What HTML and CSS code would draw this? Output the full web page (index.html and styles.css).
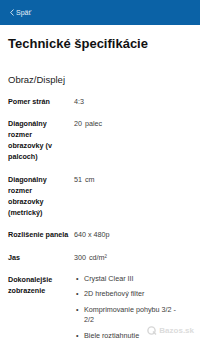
FILE: index.html
```html
<!DOCTYPE html>
<html lang="sk">
<head>
<meta charset="utf-8">
<title>Technické špecifikácie</title>
<link rel="stylesheet" href="styles.css">
</head>
<body>
<header class="topbar">
  <a class="back" href="#">
    <svg class="chev" width="4" height="7" viewBox="0 0 4 7"><path d="M3.5 0.5 L0.7 3.5 L3.5 6.5" fill="none" stroke="#fff" stroke-width="0.8"/></svg>
    <span>Späť</span>
  </a>
</header>
<main class="content">
  <h1 class="title">Technické špecifikácie</h1>
  <h2 class="section">Obraz/Displej</h2>
  <div class="specs">
    <div class="row"><div class="label">Pomer strán</div><div class="value">4:3</div></div>
    <div class="row"><div class="label">Diagonálny rozmer obrazovky (v palcoch)</div><div class="value">20<span class="unit">palec</span></div></div>
    <div class="row"><div class="label">Diagonálny rozmer obrazovky (metrický)</div><div class="value">51<span class="unit">cm</span></div></div>
    <div class="row"><div class="label">Rozlišenie panela</div><div class="value">640 x 480p</div></div>
    <div class="row"><div class="label">Jas</div><div class="value">300<span class="unit">cd/m²</span></div></div>
    <div class="row"><div class="label">Dokonalejšie zobrazenie</div>
      <ul class="value list">
        <li>Crystal Clear III</li>
        <li>2D hrebeňový filter</li>
        <li>Komprimovanie pohybu 3/2 - 2/2</li>
        <li>Biele roztiahnutie</li>
      </ul>
    </div>
  </div>
</main>
<div class="watermark"><svg width="10" height="9" viewBox="0 0 10 9"><circle cx="4.5" cy="4.5" r="3.6" fill="none" stroke="#d6d6d6" stroke-width="1.4"/><path d="M6 5.5 L9 8.5" stroke="#d6d6d6" stroke-width="1.4"/></svg><span>Bazos.sk</span></div>
</body>
</html>
```
FILE: styles.css
```css
html, body {
  margin: 0;
  padding: 0;
  background: #fff;
}
body {
  font-family: "Liberation Sans", Arial, Helvetica, sans-serif;
  color: #111;
  position: relative;
  width: 200px;
  height: 340px;
  overflow: hidden;
}
.topbar {
  height: 25px;
  background: #0b62a6;
  display: flex;
  align-items: center;
  padding-left: 10px;
}
.back {
  display: flex;
  align-items: center;
  gap: 2px;
  color: #e8f0f8;
  text-decoration: none;
  font-size: 7px;
  line-height: 8px;
}
.content {
  padding: 0 8px 0 8px;
}
.title {
  font-size: 13px;
  line-height: 16px;
  font-weight: bold;
  margin: 11px 0 0 0;
  color: #111;
}
.section {
  font-size: 9.5px;
  line-height: 12px;
  font-weight: normal;
  margin: 22px 0 0 0;
  color: #222;
}
.specs {
  margin-top: 10px;
  display: flex;
  flex-direction: column;
  gap: 11.4px;
}
.row {
  display: grid;
  grid-template-columns: 61px 1fr;
  column-gap: 5px;
  font-size: 7.2px;
  line-height: 11px;
}
.label {
  font-weight: bold;
  color: #111;
}
.value {
  color: #3c3c3c;
}
.unit {
  margin-left: 3px;
}
.list {
  list-style: none;
  margin: 0;
  padding: 0 14px 0 0;
  display: flex;
  flex-direction: column;
  gap: 5px;
}
.list li {
  display: flex;
  line-height: 10.5px;
}
.list li::before {
  content: "•";
  flex: 0 0 8px;
  padding-left: 2px;
}
.watermark {
  position: absolute;
  right: 6px;
  bottom: 5px;
  display: flex;
  align-items: center;
  gap: 2px;
  font-size: 8px;
  font-weight: bold;
  color: #dcdcdc;
}
```
